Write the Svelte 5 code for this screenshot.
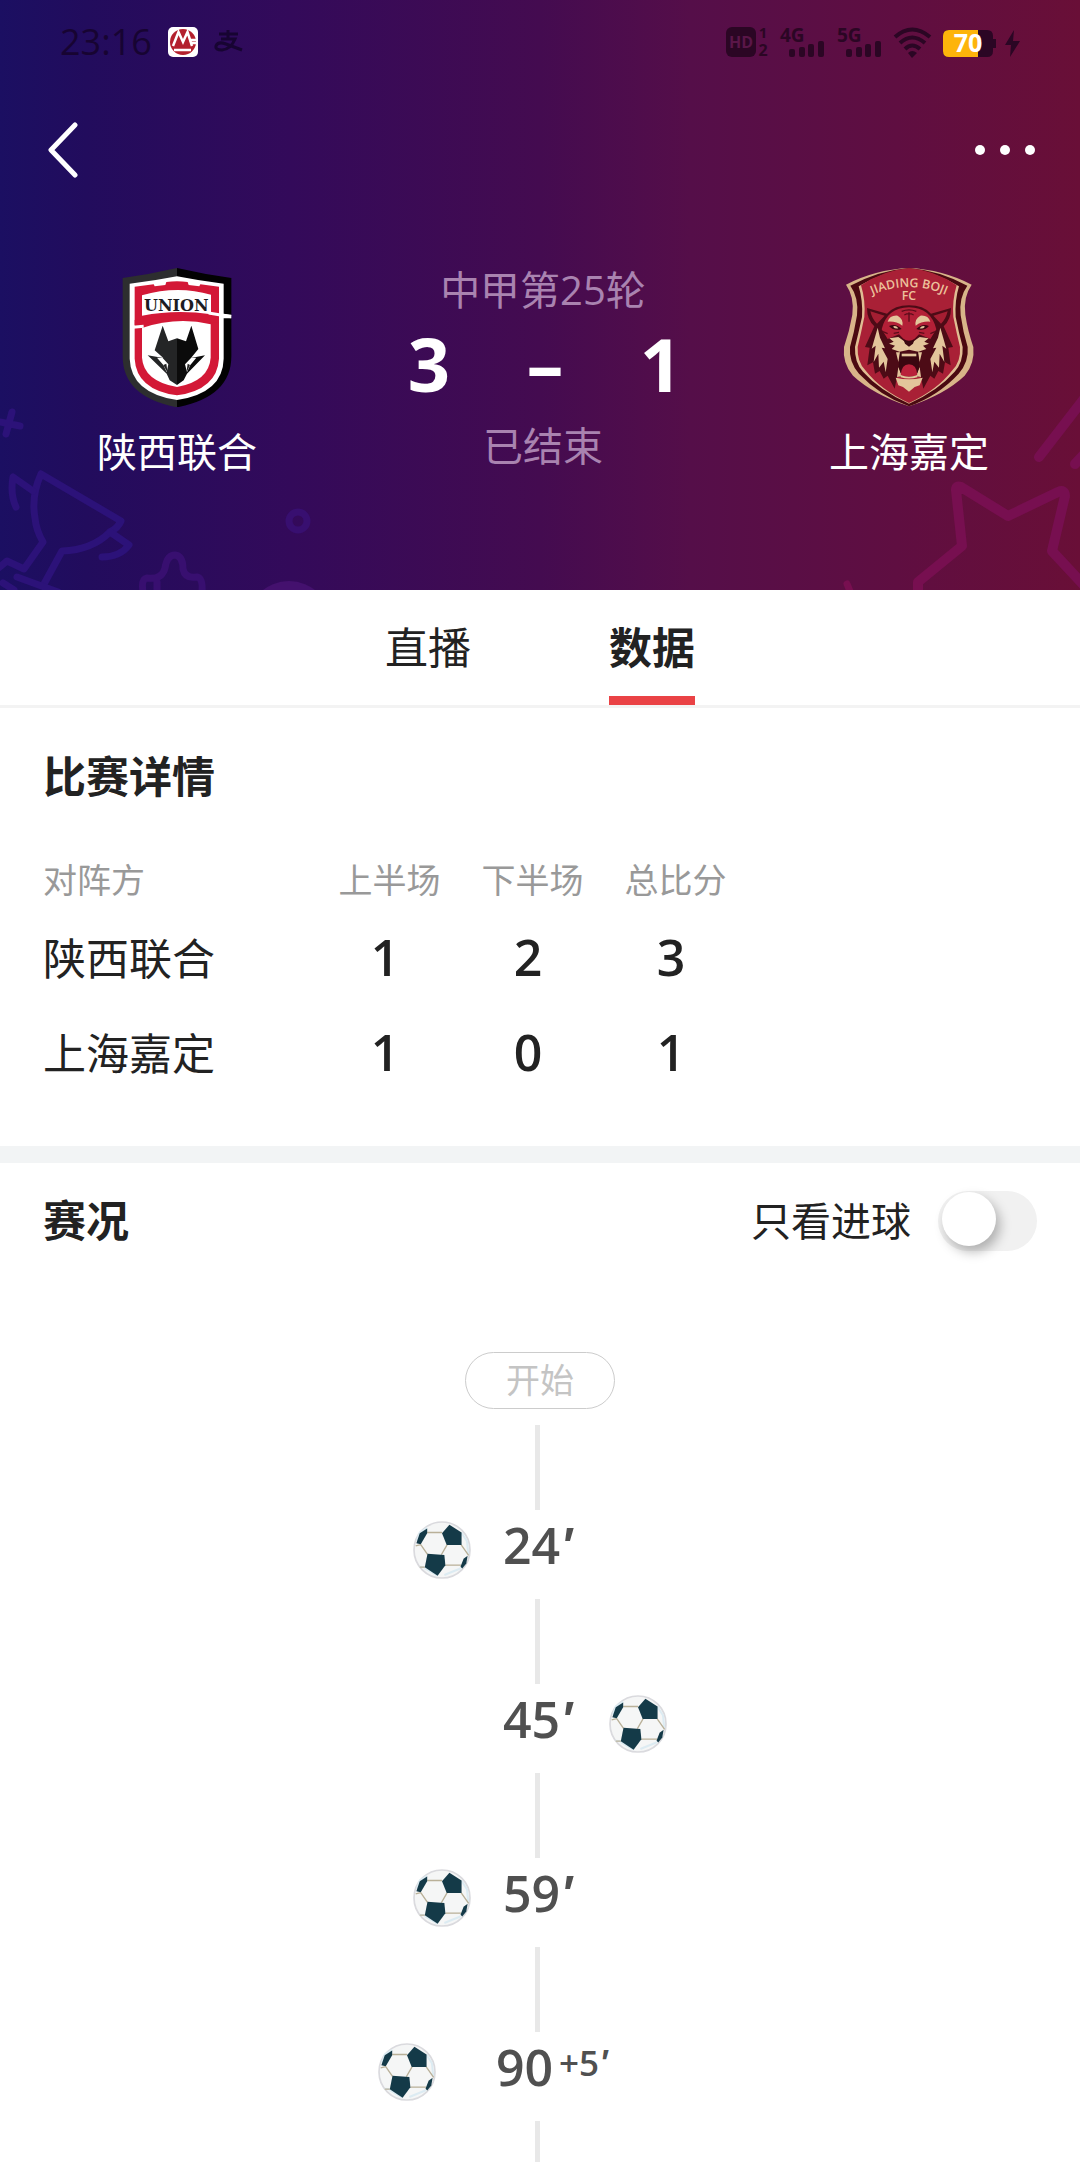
<script>
  let tab = $state('data');
  let goalsOnly = $state(false);

  const tabs = [
    { id: 'live', label: '直播' },
    { id: 'data', label: '数据' }
  ];

  const halves = ['上半场', '下半场', '总比分'];
  const scores = [
    { team: '陕西联合', values: [1, 2, 3] },
    { team: '上海嘉定', values: [1, 0, 1] }
  ];

  const events = [
    { minute: '24', extra: '', side: 'home', goal: true },
    { minute: '45', extra: '', side: 'away', goal: true },
    { minute: '59', extra: '', side: 'home', goal: true },
    { minute: '90', extra: '+5', side: 'home', goal: true }
  ];
  const shown = $derived(events.filter((e) => !goalsOnly || e.goal));
</script>

{#snippet ball()}
  <svg class="ball" viewBox="0 0 172 172" role="img" aria-label="进球">
    <circle cx="86" cy="86" r="83" fill="#f5f6f6" stroke="#dadade" stroke-width="5" />
    <path d="M12 58 20 34 42 20M143 34 160 60 164 100M35 137 20 136M73 162 35 140M93 160 142 140" fill="none" stroke="#dcebf2" stroke-width="6" />
    <path d="M42 34H86M23 70 43 99M101 71 84 100M143 71 165 102M96 131H143M35 137H20M23 70 8 74" fill="none" stroke="#b9b098" stroke-width="4" />
    <g fill="#143a48">
      <path d="M108 11 144 34V71H100L86 36Z" />
      <path d="M43 97 93 101 96 131 73 162 35 137Z" />
      <path d="M10 66 20 36 42 22V36L23 69Z" />
      <path d="M141 136 150 112 162 103 158 126 146 141Z" />
    </g>
  </svg>
{/snippet}

{#snippet bars()}
  <rect x="9" y="22" width="6" height="8" rx="2" />
  <rect x="19" y="20" width="6" height="10" rx="2" />
  <rect x="28" y="17" width="6" height="13" rx="2" />
  <rect x="38" y="14" width="6" height="16" rx="2" />
{/snippet}

<div class="page">
  <header class="hero">
    <svg class="decor left" viewBox="0 0 330 200" aria-hidden="true">
      <g fill="none" stroke="#2c1279" stroke-width="7" stroke-linecap="round" stroke-linejoin="round">
        <path d="M0 32 20 36M12 22 6 44" />
        <path d="M41 84 121 131Q118 138 110 142 92 160 62 161L44 194M41 84Q31 106 35 128 36 140 43 152L24 179 7 171-4 180" />
        <path d="M33 101 13 87Q10 104 16 117M110 142 129 155Q120 167 102 167M17 187 58 202M3 193 14 200" />
      </g>
      <g fill="none" stroke="#380f70" stroke-width="7" stroke-linecap="round" stroke-linejoin="round">
        <path d="M143 202Q141 189 147 188 162 190 165 178 167 165 175 165 183 166 183 179 185 189 197 187 203 188 202 202M157 192V202" />
        <circle cx="298" cy="131" r="9" />
      </g>
      <circle cx="289" cy="233" r="42" fill="#44116e" />
    </svg>
    <svg class="decor right" viewBox="0 0 250 200" aria-hidden="true">
      <g fill="none" stroke="#770f50" stroke-width="10" stroke-linecap="round" stroke-linejoin="round">
        <path d="M209 67 260 1M245 74 256 62" />
        <path d="M88 210V192L132 156 126 100Q126 95 131 97L178 126 228 102Q235 99 235 106L222 161 262 204" />
        <path d="M17 194 22 206" stroke-width="7" />
      </g>
    </svg>

    <div class="status">
      <div class="group">
        <span class="clock">23:16</span>
        <svg class="bank" viewBox="0 0 30 30" aria-hidden="true">
          <rect width="30" height="30" rx="5" fill="#fff" />
          <circle cx="15" cy="15" r="13" fill="#b3202d" />
          <path d="M5 19 10.500 5 15 15 19.500 5 24 19" fill="none" stroke="#fff" stroke-width="2.500" />
          <path d="M21 13H30M22 16H28M6 23H23" stroke="#fff" stroke-width="2.500" />
        </svg>
        <svg class="pay" viewBox="0 0 30 24" fill="none" stroke="#170432" stroke-width="3" aria-hidden="true">
          <path d="M5 4H24M14 0V9M7 9H21Q17 19 8 20 1 20 2 16 4 11 12 14L28 20" />
        </svg>
      </div>
      <svg class="signals" viewBox="0 0 296 30" fill="#2b0624" role="img" aria-label="4G 5G Wi-Fi 70%">
        <rect width="30" height="30" rx="6" />
        <text x="15" y="21" font-size="16" font-weight="700" text-anchor="middle" fill="#5a1648">HD</text>
        <text x="37" y="11" font-size="15" font-weight="700" text-anchor="middle">1</text>
        <text x="37" y="29" font-size="16" font-weight="700" text-anchor="middle">2</text>
        <g transform="translate(54 0)">
          <text x="0" y="15" font-size="19" font-weight="700">4G</text>
          {@render bars()}
        </g>
        <g transform="translate(111 0)">
          <text x="0" y="15" font-size="19" font-weight="700">5G</text>
          {@render bars()}
        </g>
        <g fill="none" stroke="#2b0624" stroke-width="4">
          <path d="M169 10Q186-5 204 10M174 16Q186 5 199 16M179 22Q186 15 194 22" />
        </g>
        <path d="M182 26Q186 22 191 26L186 31Z" />
        <path d="M223 3H261Q267 3 267 9V12H270V21H267V24Q267 30 261 30H223Q217 30 217 24V9Q217 3 223 3Z" />
        <path d="M223 3H252V30H223Q217 30 217 24V9Q217 3 223 3Z" fill="#fdb40b" />
        <text x="242" y="25" font-size="25" font-weight="700" text-anchor="middle" fill="#fff">70</text>
        <path d="M288 3 279 18H285L284 30 294 14H287Z" />
      </svg>
    </div>

    <nav class="topbar">
      <button aria-label="返回">
        <svg class="back" viewBox="0 0 30 56" fill="none" stroke="#fff" stroke-width="5" stroke-linecap="round" stroke-linejoin="round"><path d="M27 3 3 28 27 53" /></svg>
      </button>
      <button aria-label="更多">
        <svg class="more" viewBox="0 0 60 10" fill="#fff"><circle cx="5" cy="5" r="5" /><circle cx="30" cy="5" r="5" /><circle cx="55" cy="5" r="5" /></svg>
      </button>
    </nav>

    <div class="match">
      <div class="team">
        <svg class="crest" viewBox="140 53 420 417" role="img" aria-label="UNION">
          <path d="M350 53Q268 72 187 83V318Q187 440 350 471Z" fill="#2d2e2f" />
          <path d="M350 53Q432 72 513 83V318Q513 440 350 471Z" fill="#020202" />
          <path d="M350 78Q280 92 208 100V325Q212 428 350 449 488 428 490 325V204H513V193L490 190V100Q420 92 350 78Z" fill="#fff" />
          <path d="M223 109 280 102 283 108 315 104 318 95Q350 90 382 95L385 104 417 108 420 102 476 109V325Q470 418 350 435 228 418 223 325Z" fill="#d31836" />
          <path d="M245 135Q350 104 452 133V192Q350 176 245 196Z" fill="#fff" />
          <path d="M245 233Q350 198 451 222V322Q446 392 350 410 250 392 245 322Z" fill="#fff" />
          <path d="M223 209Q350 186 476 203V218Q350 200 223 224Z" fill="#d31836" />
          <path d="M445 188 512 199M218 231 250 228" fill="none" stroke="#fff" stroke-width="9" />
          <text x="348" y="181" class="union" text-anchor="middle">UNION</text>
          <path d="M307 226 283 300 309 323 262 315 319 370 328 390 350 404V264L324 273Z" fill="#242526" />
          <path d="M393 226 414 296 392 323 434 315 380 370 370 390 350 404V264L377 273Z" fill="#0b0b0b" />
          <path d="M307 323 324 342 319 366 309 344 290 322ZM392 323 374 342 380 366 390 344 408 322Z" fill="#fff" />
          <path d="M309 344 322 368 318 340ZM389 344 378 368 382 340Z" fill="#222" />
        </svg>
        <span>陕西联合</span>
      </div>

      <div class="result">
        <span class="muted">中甲第25轮</span>
        <div class="score"><b>3</b><b>–</b><b>1</b></div>
        <span class="muted">已结束</span>
      </div>

      <div class="team">
        <svg class="crest" viewBox="118 53 420 417" role="img" aria-label="JIADING BOJI FC">
          <path d="M328 53Q225 58 139 103 165 140 158 193 150 240 133 290 128 340 160 376 220 432 328 468 436 432 495 376 526 340 521 290 504 240 497 193 490 140 516 103 430 58 328 53Z" fill="#d8b489" />
          <path d="M328 53Q240 60 152 106 178 142 172 195 164 245 151 290 147 335 178 370 240 436 328 468 416 436 477 370 508 335 504 290 490 245 483 195 477 142 503 106 416 60 328 53Z" fill="#4a0911" />
          <path d="M328 56Q250 64 177 108 190 150 187 200 176 250 166 290 164 336 190 364 240 420 328 460 416 420 465 364 491 336 489 290 478 250 468 200 465 150 478 108 406 64 328 56Z" fill="#e0bd93" />
          <path d="M328 53Q250 60 184 105 198 150 194 200 184 250 174 290 172 334 197 360 244 420 328 458 412 420 458 360 484 334 481 290 471 250 461 200 457 150 471 105 406 60 328 53Z" fill="#a92036" />
          <path id="crest-arc" d="M204 140Q328 80 452 140" fill="none" />
          <text class="boji" fill="#edc29c"><textPath href="#crest-arc" startOffset="50%" text-anchor="middle">JIADING BOJI</textPath></text>
          <text class="boji" x="328" y="150" text-anchor="middle" fill="#edc29c">FC</text>
          <path d="M328 165Q285 165 262 190L202 173Q202 208 224 228L196 290 210 292 203 345 220 336 226 370 240 362 252 385 264 376 285 415 292 380H364L371 415 392 376 404 385 416 362 430 370 436 336 453 345 446 292 460 290 432 228Q454 208 454 173L394 190Q371 165 328 165Z" fill="#4d0b16" />
          <path d="M212 183 255 196 232 220Q218 208 212 183ZM444 183 401 196 424 220Q438 208 444 183Z" fill="#a51e32" />
          <path d="M328 171Q262 172 246 237L264 266 298 252 318 272H338L358 252 392 266 410 237Q394 172 328 171Z" fill="#b32037" />
          <g fill="#e3c59b">
            <path d="M264 214Q270 194 294 196 312 206 308 226 290 212 264 214ZM392 214Q386 194 362 196 344 206 348 226 366 212 392 214Z" />
            <path d="M324 280 296 260 269 264 282 274 268 280 286 286 276 296 300 304 328 298 356 304 380 296 370 286 388 280 374 274 387 264 360 260 332 280Z" />
            <path d="M234 232 216 295 228 286 222 335 236 310 238 352 252 334 258 366 264 326 246 292 256 294 241 262ZM422 232 440 295 428 286 434 335 420 310 418 352 404 334 398 366 392 326 410 292 400 294 415 262Z" />
            <path d="M288 382Q328 392 369 382L360 405 345 410 328 424 310 410 296 405Z" />
            <path d="M289 306H301L296 335ZM355 306H367L360 335ZM292 380 296 350 307 378ZM364 380 360 350 349 378Z" />
          </g>
          <path d="M268 227Q288 218 306 236 284 244 268 227ZM388 227Q368 218 350 236 372 244 388 227Z" fill="#3a0710" />
          <path d="M280 229Q288 224 296 234 287 237 280 229ZM376 229Q368 224 360 234 369 237 376 229Z" fill="#e3c59b" />
          <path d="M306 183Q328 174 350 183M314 194Q328 186 342 194M328 186V214M282 249 298 246M374 249 358 246M250 244 264 250M406 244 392 250" fill="none" stroke="#5b0c1a" stroke-width="4" />
          <path d="M311 266Q328 276 345 266L340 280 328 289 316 280ZM301 306Q328 318 355 306L359 350 350 376H306L297 350Z" fill="#3a0710" />
          <path d="M306 318H350V310H306Z" fill="#e3c59b" />
          <path d="M303 375Q305 342 328 342 351 342 353 375Q328 383 303 375Z" fill="#b9213a" />
          <path d="M303 374Q328 384 353 374V381Q328 388 303 381Z" fill="#e3c59b" />
        </svg>
        <span>上海嘉定</span>
      </div>
    </div>
  </header>

  <div class="tabs" role="tablist">
    {#each tabs as t}
      <button role="tab" class:active={tab === t.id} aria-selected={tab === t.id} onclick={() => (tab = t.id)}>{t.label}</button>
    {/each}
  </div>

  <main>
    <section class="details">
      <h2>比赛详情</h2>
      <table>
        <thead>
          <tr>
            <th class="name" scope="col">对阵方</th>
            {#each halves as h}<th scope="col">{h}</th>{/each}
          </tr>
        </thead>
        <tbody>
          {#each scores as row}
            <tr>
              <th class="name" scope="row">{row.team}</th>
              {#each row.values as v}<td>{v}</td>{/each}
            </tr>
          {/each}
        </tbody>
      </table>
    </section>

    <section class="progress">
      <div class="heading">
        <h2>赛况</h2>
        <label>只看进球 <input type="checkbox" role="switch" bind:checked={goalsOnly} /></label>
      </div>
      <div class="timeline">
        <span class="start">开始</span>
        <i class="link first"></i>
        {#each shown as e, i}
          <div class="event">
            <div class="side home">{#if e.side === 'home'}{@render ball()}{/if}</div>
            <div class="time" class:added={e.extra}>
              {e.minute}{#if e.extra}<small>{e.extra}<em>'</em></small>{:else}<em>'</em>{/if}
            </div>
            <div class="side">{#if e.side === 'away'}{@render ball()}{/if}</div>
          </div>
          <i class="link" class:tail={i === shown.length - 1}></i>
        {/each}
      </div>
    </section>
  </main>
</div>

<style>
  :global(body) {
    margin: 0;
    background: #fff;
  }
  .page {
    font-family: 'Open Sans', 'Noto Sans CJK SC', sans-serif;
    color: #222;
  }
  button {
    padding: 0;
    border: 0;
    background: none;
    font: inherit;
    color: inherit;
  }
  svg {
    display: block;
  }
  .hero {
    position: relative;
    overflow: hidden;
    padding-bottom: 110px;
    color: #fff;
    background: linear-gradient(90deg, #1b0f62 0%, #220c5d 8%, #330a5a 27%, #440b50 50%, #550e49 64%, #5f0e41 83%, #690f37 100%);
  }
  .decor {
    position: absolute;
    bottom: 0;
    height: 200px;
  }
  .decor.left {
    left: 0;
  }
  .decor.right {
    right: 0;
  }
  .status,
  .topbar,
  .match {
    position: relative;
  }
  .status {
    display: flex;
    align-items: center;
    justify-content: space-between;
    height: 84px;
    padding: 0 58px 0 60px;
  }
  .group {
    display: flex;
    align-items: center;
    gap: 16px;
  }
  .clock {
    font-size: 36px;
    line-height: 48px;
    color: #170432;
  }
  .bank {
    width: 30px;
    height: 30px;
  }
  .pay {
    width: 30px;
    height: 24px;
  }
  .signals {
    width: 296px;
    height: 30px;
    overflow: visible;
  }
  .topbar {
    display: flex;
    align-items: center;
    justify-content: space-between;
    height: 132px;
    padding: 0 45px 0 48px;
  }
  .back {
    width: 30px;
    height: 56px;
  }
  .more {
    width: 60px;
    height: 10px;
  }
  .match {
    display: grid;
    grid-template-columns: 200px 1fr 200px;
    margin-top: 46px;
    padding: 0 71px 0 77px;
    font-size: 40px;
    line-height: 56px;
    text-align: center;
  }
  .team {
    display: flex;
    flex-direction: column;
    align-items: center;
    gap: 17px;
    padding-top: 6px;
  }
  .crest {
    width: 140px;
    height: 139px;
  }
  .union {
    font: 700 48px 'DejaVu Serif', serif;
    fill: #1c1c22;
  }
  .boji {
    font: 600 37px 'Open Sans', sans-serif;
  }
  .result {
    display: flex;
    flex-direction: column;
    align-items: center;
  }
  .muted {
    color: #a983b0;
  }
  .score {
    display: grid;
    grid-template-columns: repeat(3, 116px);
    margin: 0 0 8px 4px;
    font-size: 74px;
    line-height: 92px;
  }
  .score b {
    font-weight: 700;
  }
  .tabs {
    display: flex;
    justify-content: center;
    gap: 138px;
    border-bottom: 3px solid #f3f3f3;
  }
  .tabs button {
    height: 115px;
    font-size: 43px;
    line-height: 60px;
    border: solid transparent;
    border-width: 9px 0;
  }
  .tabs .active {
    font-weight: 700;
    border-bottom-color: #ea4245;
  }
  h2 {
    margin: 0;
    font-size: 43px;
    line-height: 60px;
    font-weight: 700;
  }
  .details {
    padding: 39px 43px 44px;
    border-bottom: 17px solid #f2f4f5;
  }
  table {
    margin-top: 41px;
    border-collapse: collapse;
    table-layout: fixed;
    width: 702px;
  }
  th,
  td {
    width: 143px;
    padding: 0;
    box-sizing: border-box;
    text-align: center;
  }
  thead th {
    height: 64px;
    padding-left: 4px;
    font-size: 34px;
    line-height: 48px;
    font-weight: 400;
    color: #999;
  }
  th.name {
    width: 273px;
    padding-left: 0;
    text-align: left;
  }
  tbody th {
    height: 95px;
    padding-bottom: 2px;
    font-size: 43px;
    line-height: 60px;
    font-weight: 400;
  }
  td {
    padding: 0 5px 6px 0;
    font-size: 50px;
    line-height: 60px;
    font-weight: 600;
  }
  .progress {
    padding: 28px 43px 0;
  }
  .heading {
    display: flex;
    justify-content: space-between;
    align-items: center;
  }
  label {
    display: flex;
    align-items: center;
    gap: 27px;
    font-size: 40px;
    line-height: 56px;
  }
  input {
    appearance: none;
    width: 99px;
    height: 60px;
    margin: 0;
    padding: 1px 4px;
    box-sizing: border-box;
    border-radius: 30px;
    background: #f1f1f1;
  }
  input::before {
    content: '';
    display: block;
    width: 54px;
    height: 54px;
    border-radius: 50%;
    background: #fff;
    box-shadow: 4px 6px 12px rgba(0, 0, 0, 0.28);
  }
  input:checked {
    background: #ea4245;
  }
  input:checked::before {
    margin-left: 37px;
  }
  .timeline {
    display: flex;
    flex-direction: column;
    align-items: center;
    margin-top: 101px;
  }
  .start {
    padding: 0 40px;
    border: 1px solid #ccc;
    border-radius: 29px;
    font-size: 34px;
    line-height: 55px;
    color: #c4c4c4;
  }
  .link {
    width: 5px;
    height: 85px;
    margin-right: 5px;
    background: #e8e8e8;
  }
  .first {
    margin-top: 16px;
  }
  .tail {
    height: 41px;
  }
  .event {
    display: grid;
    grid-template-columns: 1fr auto 1fr;
    align-items: center;
    width: 100%;
    height: 89px;
    padding-bottom: 10px;
    box-sizing: border-box;
  }
  .side {
    display: flex;
  }
  .home {
    justify-content: flex-end;
  }
  .ball {
    width: 58px;
    height: 58px;
  }
  .time {
    width: 138px;
    padding: 0 4px 10px 0;
    box-sizing: border-box;
    font-size: 50px;
    line-height: 68px;
    font-weight: 600;
    text-align: center;
    color: #505050;
  }
  .added {
    width: 208px;
    padding-left: 28px;
  }
  em {
    font-style: italic;
    font-weight: 700;
  }
  small {
    margin-left: 6px;
    font-size: 35px;
    vertical-align: 10px;
    line-height: 40px;
  }
</style>
